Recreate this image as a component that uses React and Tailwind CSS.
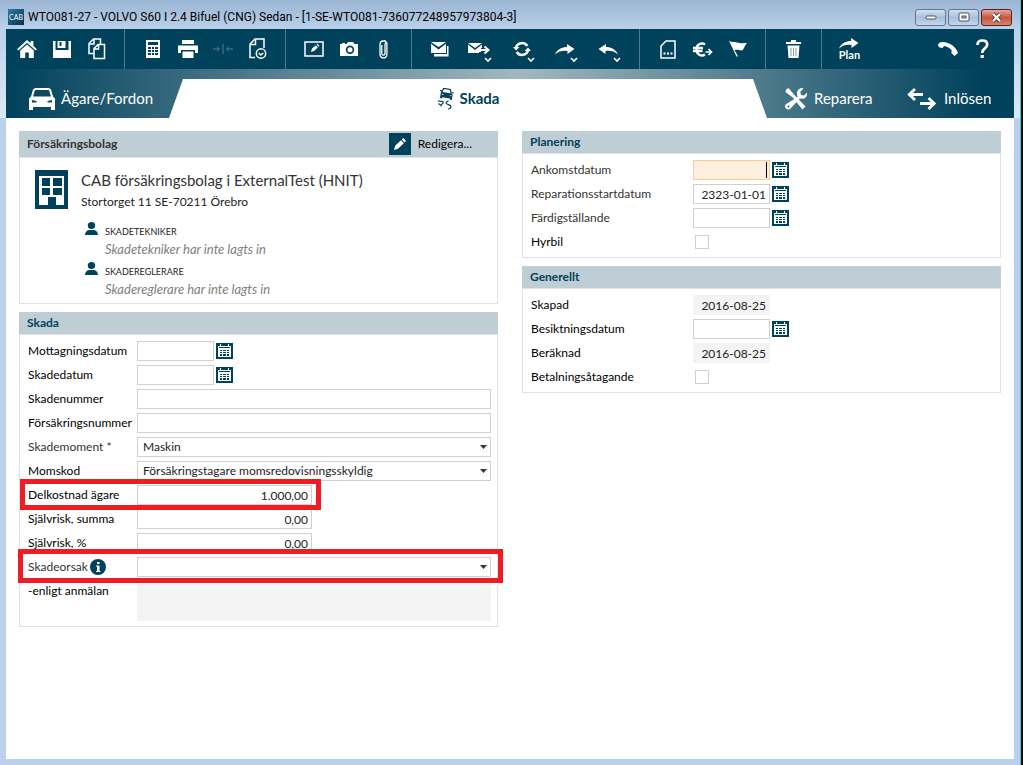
import { useId, useState } from "react";
import clsx from "clsx";

/* ---------- Icons ---------- */

const Svg = ({ w, h, children, className }) => (
  <svg
    width={w}
    height={h}
    viewBox={`0 0 ${w} ${h}`}
    fill="currentColor"
    aria-hidden="true"
    className={clsx("shrink-0", className)}
  >
    {children}
  </svg>
);

const HomeIcon = () => (
  <Svg w={20} h={18}>
    <path d="M0 9.2 10 0l3.6 3.3V1h2.8v4.9L20 9.2l-1.5 1.3L10 2.8l-8.5 7.7z" />
    <path d="M3.2 10.5 10 4.4l6.8 6.1V18h-5v-5.5H8.2V18h-5z" />
  </Svg>
);

const SaveIcon = () => (
  <Svg w={18} h={17}>
    <path d="M0 0h2.5v9h13V0H18v17H0z" />
    <path d="M4.5 0h8v7h-8zM6.5 1v4h2V1z" fillRule="evenodd" />
  </Svg>
);

const CopyIcon = () => (
  <Svg w={18} h={22}>
    <g fill="none" stroke="currentColor" strokeWidth="1.5">
      <path d="M5.5 15.500h-4.500V5.500L5.500 1h7v5" />
      <path d="M1 6h5V1" />
      <path d="M6 20.500v-10l4-4h6.500v14zM6 11h4.500V6.500" />
    </g>
  </Svg>
);

const CalculatorIcon = () => (
  <Svg w={14} h={18}>
    <path
      fillRule="evenodd"
      d="M0 0h14v18H0zM2 2v3h10V2zM2 7v2h3V7zM6 7v2h2V7zM9 7v2h3V7zM2 10v2h3v-2zM6 10v2h2v-2zM9 10v2h3v-2zM2 13v2h3v-2zM6 13v2h2v-2zM9 13v2h3v-2z"
    />
  </Svg>
);

const PrinterIcon = () => (
  <Svg w={20} h={18}>
    <path d="M4 0h12v4H4zM0 5.500h20V13h-3v-3H3v3H0zM4.500 11.500h11V18h-11z" />
  </Svg>
);

const CompressIcon = () => (
  <Svg w={20} h={10} className="text-[#547d8e]">
    <path
      d="M0 5h6M4 2.500 6.500 5 4 7.500M20 5h-6M16 2.500 13.500 5 16 7.500M10 0v10"
      fill="none"
      stroke="currentColor"
    />
  </Svg>
);

const DocClockIcon = () => (
  <Svg w={18} h={22}>
    <g fill="none" stroke="currentColor" strokeWidth="1.500">
      <path d="M6 19.500H1V6L6 1h9v9" />
      <path d="M1 6.500h5.500V1" />
      <circle cx="12" cy="15.500" r="4.700" />
      <path d="m9.800 15 2 2 2.500-2" />
    </g>
  </Svg>
);

const EditIcon = () => (
  <Svg w={20} h={16}>
    <rect x="1" y="1" width="18" height="14" fill="none" stroke="currentColor" strokeWidth="1.500" />
    <path d="m7 11 1-3.500 3.800-3.300 2 2.200L10 10zM12.500 3.600l1-.8 2 2.200-1 .8z" />
  </Svg>
);

const CameraIcon = () => (
  <Svg w={18} h={14}>
    <path
      fillRule="evenodd"
      d="M1 2h1V1h3v1h1.500L8 0h5l1.500 2H18v12H0V2zM10 3.500a4.200 4.200 0 1 0 0 8.400 4.200 4.200 0 0 0 0-8.400M10 5.200a2.500 2.500 0 1 1 0 5 2.500 2.500 0 0 1 0-5"
    />
  </Svg>
);

const ClipIcon = () => (
  <Svg w={9} h={19}>
    <path
      d="M2.800 5v8.500a1.500 1.500 0 0 0 3.200 0V3.500M6 4a1.600 1.600 0 0 0-1.500-3H4A3.300 3.300 0 0 0 1 4v10.500a3.300 3.300 0 0 0 6.900 0V4.500A3 3 0 0 0 5 1"
      fill="none"
      stroke="currentColor"
      strokeWidth="1.300"
    />
  </Svg>
);

const MailIcon = () => (
  <Svg w={18} h={15}>
    <path d="M0 0h15L7.500 5zM0 1.800 7.500 7.500 15 1.800V11H0z" />
    <path d="M16 4h1.500v10.500H3V12h13z" />
  </Svg>
);

const MailForwardIcon = () => (
  <Svg w={22} h={12}>
    <path d="M0 0h14L7 5zM0 1.500 7 7l7-5.500V5h-1v4h-2v1H0z" />
    <path d="M13 7h7M16.500 3.500 20.500 7l-4 3.500" fill="none" stroke="currentColor" strokeWidth="2" />
  </Svg>
);

const RefreshIcon = () => (
  <Svg w={18} h={16}>
    <path
      d="M3 6.500A6.200 6 0 0 1 14.300 5M15 9.500A6.200 6 0 0 1 3.700 11"
      fill="none"
      stroke="currentColor"
      strokeWidth="2.500"
    />
    <path d="M0 6h6.500L3 9.500zM11.500 10H18l-3-3.500z" />
  </Svg>
);

const ForwardArrowIcon = ({ flip }) => (
  <Svg w={20} h={11} className={flip && "-scale-x-100"}>
    <path d="M0 10.500C2.500 5 7 3 12 3V0l7.500 5-7 5V7C8 6.300 4 7 0 10.500z" />
  </Svg>
);

const DocDotsIcon = () => (
  <Svg w={16} h={19}>
    <path d="M1 18V6l5-5h9v17z" fill="none" stroke="currentColor" strokeWidth="1.500" />
    <path d="M3.500 12.500h2v2h-2zM7 12.500h2v2H7zM10.500 12.500h2v2h-2z" />
  </Svg>
);

const EuroIcon = () => (
  <Svg w={20} h={15}>
    <path
      d="M12 2.500A5.500 5.500 0 0 0 3.500 7.500 5.500 5.500 0 0 0 12 12.500M0 6h10M0 9h9.500"
      fill="none"
      stroke="currentColor"
      strokeWidth="2.300"
    />
    <path d="M12.500 10h6M15.500 7l3 3-3 3" fill="none" stroke="currentColor" strokeWidth="1.700" />
  </Svg>
);

const FlagIcon = () => (
  <Svg w={18} h={16}>
    <path d="M0 0c3 1.500 5 .5 8 1.500 3 1 6 .5 10 .5-2 1.500-2.500 5.500-5 7.500-3-.5-5-1-7.500-.5L9 15.500H7.500z" />
  </Svg>
);

const TrashIcon = () => (
  <Svg w={15} h={18}>
    <path d="M5 0h5v2h5v2H0V2h5zM1.500 5.500h12L12.500 18h-10z" />
    <path d="M5 8v8M7.500 8v8M10 8v8" stroke="#00415b" strokeWidth=".5" />
  </Svg>
);

const PhoneIcon = () => (
  <Svg w={20} h={14}>
    <path d="M0 3.500C0 1 2 0 4.500 0 12 0 18 5 20 11l-3.500 3-3.300-3.300.6-2.300C12 6 9 4.400 6 4l-1.500 2L1.500 5.500z" />
  </Svg>
);

const HelpIcon = () => (
  <Svg w={13} h={20}>
    <path
      d="M1.500 6C1.500 3 3.500 1.500 6.300 1.500c2.800 0 4.900 1.500 4.900 4 0 4.200-5 3.700-5 8.500"
      fill="none"
      stroke="currentColor"
      strokeWidth="2.700"
    />
    <path d="M4.600 16h3.200v3H4.600z" />
  </Svg>
);

const CarIcon = () => (
  <Svg w={26} h={22}>
    <path
      fillRule="evenodd"
      d="M6 0h14l2 1.500 2 7 2 2V22h-4v-3H4v3H0V10.500l2-2 2-7zM6 2 4 8.500h18L20 2zM3 12v2.500h4.500V13zM23 12l-4.500 1v1.500H23z"
    />
  </Svg>
);

const SkidIcon = () => (
  <Svg w={17} h={22}>
    <g transform="rotate(9 9 6)">
      <path d="M4.500 5 5.800.8h7L14 5" fill="none" stroke="currentColor" strokeWidth="1.200" />
      <path
        fillRule="evenodd"
        d="M4 4.500h10.500l1.200 1.300V11h-2V9.800h-8V11h-2V5.800zM5 6.200v1.200h2.200zM14.500 6.200l-2.200 1.200h2.200z"
      />
      <path d="M2.500 3h1.800v1.300H2.500zM14.500 3h1.800v1.300h-1.800z" />
    </g>
    <path
      d="M1 12.500c1 1.500 2.500.5 4 .8s2 1.200.5 2.200-2 1.500-1.500 3M11.500 13c-2 .5-3 1.500-2 2.700s4.500 1 4.500 3-1.500 1.800-3 2.300M1.500 15.500l2 1.500"
      fill="none"
      stroke="currentColor"
      strokeWidth="1.200"
    />
  </Svg>
);

const ToolsIcon = () => (
  <Svg w={22} h={22}>
    <path d="M1 1.500 3.500 0l5.500 6.500-2.300 2.300L.5 4z" />
    <path d="m6.500 8 2-2 12 12.500-3 3z" />
    <path d="m13 8.500 2 2L5.500 20.500a3 3 0 0 1-4.500-4.300z" />
    <path d="M18.500.3a5.200 5.200 0 0 0-6.500 6c.3 4 5 6 8.300 3.400 1.500-1.200 2-3 1.600-4.900L19 7.500l-3-.5-.7-3z" />
    <circle cx="3.500" cy="18.500" r="1" fill="#2b5f75" />
  </Svg>
);

const SwapIcon = () => (
  <Svg w={30} h={22}>
    <path
      d="M2 6.500h14M8 1 2.300 6.500 8 12M13 15.500h14.500M21.500 10l5.700 5.500-5.700 5.500"
      fill="none"
      stroke="currentColor"
      strokeWidth="2.800"
    />
  </Svg>
);

const PencilIcon = () => (
  <Svg w={12} h={12}>
    <path d="m0 12 1.200-4.200L7 2.300l2.800 2.900-5.800 5.600zM7.800 1.500 9.300 0 12 2.900l-1.500 1.500z" />
  </Svg>
);

const BuildingIcon = () => (
  <Svg w={33} h={39} className="text-[#00415b]">
    <path d="M0 0h33v39H0z" />
    <path fill="#fff" d="M4 6h25v29H4z" />
    <path d="M7 8h8v8H7zM18 8h9v8h-9zM7 18h8v7H7zM18 18h9v7h-9zM13 27h8v8h-8z" />
  </Svg>
);

const PersonIcon = () => (
  <Svg w={13} h={13} className="text-[#00415b]">
    <ellipse cx="6.500" cy="3.500" rx="3.700" ry="3.500" />
    <path d="M0 13c0-3 2-5 4.500-5h4C11 8 13 10 13 13z" />
  </Svg>
);

const CalendarIcon = () => (
  <Svg w={17} h={16}>
    <path fill="#00415b" d="M0 0h17v16H0z" />
    <path
      fill="#fff"
      fillRule="evenodd"
      d="M2 3h2V1h1v2h7V1h1v2h2v11H2zM3 4v1h11V4zM4 7v1h2V7zM7 7v1h3V7zM11 7v1h2V7zM4 9v1h2V9zM7 9v1h3V9zM11 9v1h2V9zM4 11v2h2v-2zM7 11v2h3v-2zM11 11v2h2v-2z"
    />
  </Svg>
);

const InfoIcon = () => (
  <Svg w={16} h={16}>
    <circle cx="8" cy="8" r="8" fill="#00415b" />
    <path fill="#fff" d="M7 3h2.500v2H7zM6 6.500h3.500V12h1v1H6v-1h1V7.500H6z" />
  </Svg>
);

/* ---------- Title bar and toolbar ---------- */

const WindowButton = ({ label, close, children }) => (
  <button
    type="button"
    aria-label={label}
    className={clsx(
      "flex h-[17px] w-[31px] items-center justify-center rounded-[3px] border",
      close
        ? "border-[#5b1f24] bg-linear-to-b from-[#e5a99d] via-[#c8543e] to-[#d58467]"
        : "border-[#64788f] bg-linear-to-b from-[#d3e0ee] via-[#a9bfd8] to-[#c2d6ec]"
    )}
  >
    {children}
  </button>
);

const TitleBar = () => (
  <header className="flex h-[29px] items-center gap-1 pt-[5px] pr-2 pl-2">
    <span className="flex size-4 items-center justify-center bg-linear-to-br from-[#2c7fa0] to-[#05324a] text-[7px] text-white">
      CAB
    </span>
    <h1 className="truncate font-['Roboto',sans-serif] text-[12px] text-black">
      WTO081-27 - VOLVO S60 I 2.4 Bifuel (CNG) Sedan - [1-SE-WTO081-736077248957973804-3]
    </h1>
    <div className="ml-auto flex shrink-0 gap-0.5">
      <WindowButton label="Minimera">
        <Svg w={12} h={5}>
          <rect x="1" y="1" width="10" height="3" rx="1" fill="#fff" stroke="#4a5566" />
        </Svg>
      </WindowButton>
      <WindowButton label="Maximera">
        <Svg w={12} h={10}>
          <rect x="1" y="1" width="10" height="8" rx="1" fill="#fff" stroke="#4a5566" />
          <rect x="4" y="4" width="4" height="2" fill="#a9bfd8" stroke="#4a5566" />
        </Svg>
      </WindowButton>
      <WindowButton label="Stäng" close>
        <Svg w={13} h={11}>
          <path d="m3 2 7 7M10 2 3 9" stroke="#4d3a44" strokeWidth="4" />
          <path d="m3 2 7 7M10 2 3 9" stroke="#fff" strokeWidth="2.300" />
        </Svg>
      </WindowButton>
    </div>
  </header>
);

const ToolButton = ({ label, menu, children }) => (
  <button
    type="button"
    aria-label={label}
    className={clsx(
      "relative flex h-10 items-center justify-center text-white",
      menu ? "w-[43px]" : "w-[35px]"
    )}
  >
    {children}
    {menu && (
      <svg
        width="8"
        height="6"
        viewBox="0 0 8 6"
        className="absolute right-2 bottom-1.5"
        aria-hidden="true"
      >
        <path d="m1 1 3 3 3-3" fill="none" stroke="currentColor" strokeWidth="1.600" />
      </svg>
    )}
  </button>
);

const ToolGroup = ({ first, last, children }) => (
  <div
    className={clsx(
      "flex pr-2.5",
      first ? "pl-[3px]" : "pl-2.5",
      !last && "border-r border-[#4f7a8b]"
    )}
  >
    {children}
  </div>
);

const Toolbar = () => (
  <div className="flex h-10 bg-[#00415b] pr-3.5">
    <ToolGroup first>
      <ToolButton label="Hem"><HomeIcon /></ToolButton>
      <ToolButton label="Spara"><SaveIcon /></ToolButton>
      <ToolButton label="Kopiera"><CopyIcon /></ToolButton>
    </ToolGroup>
    <ToolGroup>
      <ToolButton label="Kalkyl"><CalculatorIcon /></ToolButton>
      <ToolButton label="Skriv ut"><PrinterIcon /></ToolButton>
      <ToolButton label="Jämför"><CompressIcon /></ToolButton>
      <ToolButton label="Historik"><DocClockIcon /></ToolButton>
    </ToolGroup>
    <ToolGroup>
      <ToolButton label="Anteckning"><EditIcon /></ToolButton>
      <ToolButton label="Bilder"><CameraIcon /></ToolButton>
      <ToolButton label="Bilagor"><ClipIcon /></ToolButton>
    </ToolGroup>
    <ToolGroup>
      <ToolButton label="Meddelanden"><MailIcon /></ToolButton>
      <ToolButton label="Skicka meddelande" menu><MailForwardIcon /></ToolButton>
      <ToolButton label="Uppdatera" menu><RefreshIcon /></ToolButton>
      <ToolButton label="Skicka vidare" menu><ForwardArrowIcon /></ToolButton>
      <ToolButton label="Skicka tillbaka" menu><ForwardArrowIcon flip /></ToolButton>
    </ToolGroup>
    <ToolGroup>
      <ToolButton label="Dokument"><DocDotsIcon /></ToolButton>
      <ToolButton label="Betalning"><EuroIcon /></ToolButton>
      <ToolButton label="Flagga"><FlagIcon /></ToolButton>
    </ToolGroup>
    <ToolGroup>
      <ToolButton label="Ta bort"><TrashIcon /></ToolButton>
    </ToolGroup>
    <ToolGroup last>
      <ToolButton label="Plan">
        <span className="flex flex-col items-center">
          <ForwardArrowIcon />
          <span className="text-[11px] leading-[11px] font-bold">Plan</span>
        </span>
      </ToolButton>
    </ToolGroup>
    <div className="ml-auto flex">
      <ToolButton label="Telefon"><PhoneIcon /></ToolButton>
      <ToolButton label="Hjälp"><HelpIcon /></ToolButton>
    </div>
  </div>
);

const Tabs = () => (
  <nav className="flex h-[49px] bg-[linear-gradient(90deg,#00415b_0%,#a2b8c1_51%,#00415b_97%)] pt-2.5 text-[15px] text-white">
    <a href="#agare" className="flex w-[163px] items-center gap-1.5 pl-[23px]">
      <CarIcon />
      Ägare/Fordon
    </a>
    <a
      href="#skada"
      aria-current="page"
      className="flex flex-1 items-center justify-center gap-1.5 bg-white font-bold text-[#00415b] [clip-path:polygon(14px_0,calc(100%-14px)_0,100%_100%,0_100%)]"
    >
      <SkidIcon />
      Skada
    </a>
    <a href="#reparera" className="flex w-[140px] items-center gap-[7px] pl-[18px]">
      <ToolsIcon />
      Reparera
    </a>
    <a href="#inlosen" className="flex w-[107px] items-center gap-[7px]">
      <SwapIcon />
      Inlösen
    </a>
  </nav>
);

/* ---------- Form parts ---------- */

const Panel = ({ title, action, children }) => (
  <section className="border border-t-0 border-[#dde3e8]">
    <div
      className={clsx(
        "-mx-px flex items-center bg-[#bfced5] pl-2",
        action ? "h-[26px]" : "h-[22px]"
      )}
    >
      <h2 className={clsx("text-[12px] font-bold", action ? "text-[#333]" : "text-[#00415b]")}>
        {title}
      </h2>
      {action}
    </div>
    <div className="border-t border-[#dde3e8]">{children}</div>
  </section>
);

const Row = ({ label, htmlFor, wide, muted, extra, children }) => (
  <div className="relative flex min-h-5">
    <div
      className={clsx(
        "flex h-5 shrink-0 items-center gap-0.5",
        wide ? "w-[162px]" : "w-[109px]",
        muted ? "text-[#333]" : "text-black"
      )}
    >
      <label htmlFor={htmlFor} className="whitespace-nowrap">{label}</label>
      {extra}
    </div>
    {children}
  </div>
);

const boxStyle = "h-5 border border-[#d0d0d0] bg-white text-[#222] outline-none";

const DateRow = ({ label, wide, muted, active, readOnly, value = "" }) => {
  const id = useId();
  const [date, setDate] = useState(value);

  return (
    <Row label={label} htmlFor={id} wide={wide} muted={muted}>
      <div className="relative">
        <input
          id={id}
          type="text"
          value={date}
          readOnly={readOnly}
          onChange={(e) => setDate(e.target.value)}
          className={clsx(
            "block h-5 w-[77px] border pr-[3px] text-right text-[#222] outline-none",
            active && "border-[#fbcb98] bg-[#ffefdf]",
            readOnly && "border-[#f3f3f3] bg-[#f3f3f3]",
            !active && !readOnly && "border-[#d0d0d0] bg-white"
          )}
        />
        {active && <span className="absolute top-0.5 right-[3px] h-4 w-px bg-black" />}
      </div>
      {!readOnly && (
        <button type="button" aria-label={`Välj ${label}`} className="ml-0.5">
          <CalendarIcon />
        </button>
      )}
    </Row>
  );
};

const TextRow = ({ label, value = "", amount, marked }) => {
  const id = useId();
  const [text, setText] = useState(value);

  return (
    <Row label={label} htmlFor={id}>
      <input
        id={id}
        type="text"
        value={text}
        onChange={(e) => setText(e.target.value)}
        className={clsx(boxStyle, amount ? "w-[175px] pr-[3px] text-right" : "min-w-0 flex-1 px-1")}
      />
      {marked && (
        <div className="pointer-events-none absolute -top-1.5 -left-2 z-10 h-[31px] w-[301px] border-5 border-[#ee1c25]" />
      )}
    </Row>
  );
};

const SelectRow = ({ label, value, muted, extra, marked }) => {
  const id = useId();

  return (
    <Row label={label} htmlFor={id} muted={muted} extra={extra}>
      <div className="relative flex-1">
        <select id={id} className={clsx(boxStyle, "block w-full appearance-none pl-[5px]")}>
          <option>{value}</option>
        </select>
        <svg
          width="7"
          height="4"
          viewBox="0 0 7 4"
          className="pointer-events-none absolute top-2 right-1"
          aria-hidden="true"
        >
          <path d="M0 0h7L3.500 4z" fill="#333" />
        </svg>
      </div>
      {marked && (
        <div className="pointer-events-none absolute -top-2 -right-3 -left-2.5 z-10 h-[34px] border-5 border-[#ee1c25]" />
      )}
    </Row>
  );
};

const CheckRow = ({ label }) => {
  const id = useId();

  return (
    <Row label={label} htmlFor={id} wide>
      <input
        id={id}
        type="checkbox"
        className="mt-[3px] ml-0.5 size-3.5 appearance-none border border-[#d0d0d0] bg-white checked:bg-[#00415b]"
      />
    </Row>
  );
};

const Contact = ({ role, text }) => (
  <div className="flex gap-[7px]">
    <PersonIcon />
    <div>
      <h3 className="pt-0.5 text-[9px] leading-[15px] text-[#222]">{role}</h3>
      <p className="text-[13px] leading-[20px] text-[#808080] italic">{text}</p>
    </div>
  </div>
);

/* ---------- Panels ---------- */

const CompanyPanel = () => (
  <Panel
    title="Försäkringsbolag"
    action={
      <button type="button" className="mr-[26px] ml-auto flex items-center gap-[7px] text-[12px] text-black">
        <span className="flex size-[22px] items-center justify-center bg-[#00415b] text-white">
          <PencilIcon />
        </span>
        Redigera...
      </button>
    }
  >
    <div className="flex gap-[13px] px-[15px]">
      <div className="pt-3">
        <BuildingIcon />
      </div>
      <div className="pt-[11px]">
        <p className="text-[15px] leading-[22px] text-[#333]">
          CAB försäkringsbolag i ExternalTest (HNIT)
        </p>
        <p className="text-[12px] leading-[22px] text-[#222]">Stortorget 11 SE-70211 Örebro</p>
        <div className="flex flex-col gap-[3px] pt-[9px] pb-1 pl-1">
          <Contact role="SKADETEKNIKER" text="Skadetekniker har inte lagts in" />
          <Contact role="SKADEREGLERARE" text="Skadereglerare har inte lagts in" />
        </div>
      </div>
    </div>
  </Panel>
);

const DamagePanel = () => {
  const noteId = useId();

  return (
    <Panel title="Skada">
      <div className="flex flex-col gap-1 pt-1.5 pr-1.5 pb-[5px] pl-2">
        <DateRow label="Mottagningsdatum" />
        <DateRow label="Skadedatum" />
        <TextRow label="Skadenummer" />
        <TextRow label="Försäkringsnummer" />
        <SelectRow label="Skademoment *" value="Maskin" muted />
        <SelectRow label="Momskod" value="Försäkringstagare momsredovisningsskyldig" />
        <TextRow label="Delkostnad ägare" value="1.000,00" amount marked />
        <TextRow label="Självrisk, summa" value="0,00" amount />
        <TextRow label="Självrisk, %" value="0,00" amount />
        <SelectRow label="Skadeorsak" value="" muted extra={<InfoIcon />} marked />
        <Row label="-enligt anmälan" htmlFor={noteId}>
          <textarea
            id={noteId}
            readOnly
            className="block h-10 flex-1 resize-none bg-[#f3f3f3] outline-none"
          />
        </Row>
      </div>
    </Panel>
  );
};

const PlanningPanel = () => (
  <Panel title="Planering">
    <div className="flex flex-col gap-1 pt-1.5 pr-1.5 pb-[5px] pl-2">
      <DateRow label="Ankomstdatum" wide muted active />
      <DateRow label="Reparationsstartdatum" wide muted value="2323-01-01" />
      <DateRow label="Färdigställande" wide muted />
      <CheckRow label="Hyrbil" />
    </div>
  </Panel>
);

const GeneralPanel = () => (
  <Panel title="Generellt">
    <div className="flex flex-col gap-1 pt-1.5 pr-1.5 pb-[5px] pl-2">
      <DateRow label="Skapad" wide readOnly value="2016-08-25" />
      <DateRow label="Besiktningsdatum" wide />
      <DateRow label="Beräknad" wide readOnly value="2016-08-25" />
      <CheckRow label="Betalningsåtagande" />
    </div>
  </Panel>
);

const App = () => {
  return (
    <div className="flex min-h-screen flex-col border-r-2 border-black bg-[linear-gradient(180deg,#9ab5d3_0px,#b9d1ea_29px,#dde9f6_118px,#b9d1ea_118px)] font-['Lato',sans-serif] text-[12px]">
      <div className="flex flex-1 flex-col border-r border-[#2fc6ea]">
        <TitleBar />
        <div className="mx-1.5 mb-1.5 flex flex-1 flex-col bg-white">
          <Toolbar />
          <Tabs />
          <main className="grid grid-cols-2 items-start gap-6 p-[13px]">
            <div className="flex min-w-0 flex-col gap-2">
              <CompanyPanel />
              <DamagePanel />
            </div>
            <div className="flex min-w-0 flex-col gap-2">
              <PlanningPanel />
              <GeneralPanel />
            </div>
          </main>
        </div>
      </div>
    </div>
  );
};

export default App;
